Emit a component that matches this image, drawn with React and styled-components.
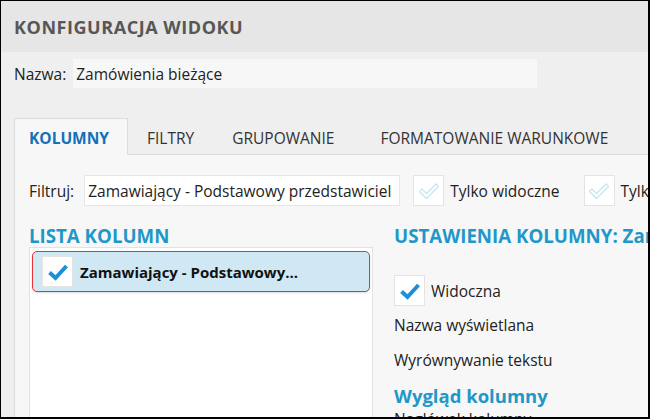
import React from "react";
import styled, { createGlobalStyle } from "styled-components";

const Global = createGlobalStyle`
  html, body { margin: 0; padding: 0; background: #efefef; }
  * { box-sizing: border-box; }
  body { font-family: "Open Sans", "Noto Sans", sans-serif; }
`;

const Frame = styled.div`
  width: 650px;
  height: 419px;
  overflow: hidden;
  border-style: solid;
  border-color: #000;
  border-width: 1px 2px 2px 1px;
  background: #efefef;
  display: flex;
  flex-direction: column;
`;

const Header = styled.div`
  height: 51px;
  flex: none;
  background: #e6e6e6;
  display: flex;
  align-items: center;
  padding-left: 13px;
  padding-top: 1px;
`;

const Title = styled.h1`
  margin: 0;
  font-size: 18px;
  font-weight: 700;
  color: #575757;
  letter-spacing: 0.55px;
  white-space: nowrap;
`;

const NameRow = styled.div`
  display: flex;
  align-items: center;
  margin: 7px 0 0 13px;
  height: 29px;
  flex: none;
`;

const Label = styled.span`
  font-size: 15.5px;
  color: #222;
  white-space: nowrap;
`;

const NameInput = styled.div`
  margin-left: 7px;
  width: 464px;
  height: 29px;
  background: #f7f7f7;
  font-size: 15.5px;
  color: #222;
  display: flex;
  align-items: center;
  padding-left: 3px;
  white-space: nowrap;
`;

const TabStrip = styled.div`
  margin: 30px 0 0 13px;
  display: flex;
  align-items: stretch;
  height: 37px;
  border-bottom: 1px solid #dcdcdc;
  flex: none;
`;

const Tab = styled.div`
  padding: 2px 18px 0 ${(p) => p.$pl}px;
  display: flex;
  align-items: center;
  font-size: 15.5px;
  text-transform: uppercase;
  white-space: nowrap;
  color: ${(p) => (p.$active ? "#1570b8" : "#333")};
  font-weight: ${(p) => (p.$active ? 700 : 400)};
  background: ${(p) => (p.$active ? "#f7f7f7" : "transparent")};
  border: 1px solid ${(p) => (p.$active ? "#dcdcdc" : "transparent")};
  border-bottom: none;
  margin-bottom: -1px;
`;

const Panel = styled.div`
  margin-left: 13px;
  flex: 1;
  background: #f7f7f7;
  border-left: 1px solid #dcdcdc;
  padding: 20px 0 0 14px;
  display: flex;
  flex-direction: column;
  min-width: 0;
  min-height: 0;
`;

const FilterRow = styled.div`
  display: flex;
  align-items: center;
  height: 31px;
  white-space: nowrap;
  flex: none;
`;

const FilterInput = styled.div`
  margin-left: 10px;
  width: 316px;
  height: 31px;
  background: #fff;
  border: 1px solid #e6e6e6;
  font-size: 15.5px;
  color: #222;
  display: flex;
  align-items: center;
  padding-left: 3px;
  flex: none;
  overflow: hidden;
`;

const CheckBox = styled.div`
  width: 31px;
  height: 31px;
  flex: none;
  background: #fff;
  border: 1px solid #e4e4e4;
  display: flex;
  align-items: center;
  justify-content: center;
  margin-left: ${(p) => p.$ml || 0}px;
`;

const CheckLabel = styled.span`
  font-size: 15.5px;
  color: #222;
  margin-left: 6px;
  white-space: nowrap;
`;

const Columns = styled.div`
  display: flex;
  margin-top: 19px;
  flex: 1;
  min-height: 0;
`;

const LeftCol = styled.div`
  width: 344px;
  flex: none;
  display: flex;
  flex-direction: column;
`;

const RightCol = styled.div`
  margin-left: 21px;
  display: flex;
  flex-direction: column;
  white-space: nowrap;
  min-width: 0;
`;

const SectionTitle = styled.h2`
  margin: 0;
  font-size: 18.7px;
  line-height: 22px;
  font-weight: 700;
  color: #1f98c9;
  white-space: nowrap;
`;

const ListBox = styled.div`
  flex: 1;
  background: #fff;
  border: 1px solid #e2e2e2;
  border-bottom: none;
  padding: 3px 2px;
`;

const ListItem = styled.div`
  height: 41px;
  background: #cfe8f4;
  border: 1.5px solid #e8323a;
  border-radius: 5px;
  box-shadow: 0 1px 2px rgba(0, 0, 0, 0.15);
  display: flex;
  align-items: center;
  padding-left: 9px;
`;

const ItemText = styled.span`
  margin-left: 7px;
  font-size: 15px;
  font-weight: 700;
  color: #111;
  white-space: nowrap;
`;

const VisibleRow = styled.div`
  display: flex;
  align-items: center;
  margin-top: 28px;
`;

const FieldLabel = styled.div`
  font-size: 15.5px;
  line-height: 20px;
  color: #222;
  margin-top: ${(p) => p.$mt}px;
`;

const SubTitle = styled.div`
  font-size: 18.5px;
  line-height: 24px;
  font-weight: 700;
  color: #1f98c9;
  margin-top: 14px;
`;

const FaintCheck = () => (
  <svg width="22" height="19" viewBox="0 0 22 19">
    <path
      d="M1.5 10.5 L4 8 L8.5 12.5 L18 3 L20.5 5.5 L8.5 17.5 Z"
      fill="none"
      stroke="#c6e5f4"
      strokeWidth="1.3"
      strokeLinejoin="round"
    />
  </svg>
);

const BoldCheck = () => (
  <svg width="22" height="18" viewBox="0 0 22 18">
    <path
      d="M2.5 9.5 L8.5 15 L19.5 3"
      fill="none"
      stroke="#1c8fd6"
      strokeWidth="4"
      strokeLinecap="butt"
    />
  </svg>
);

export default function App() {
  return (
    <>
      <Global />
      <Frame>
        <Header>
          <Title>KONFIGURACJA WIDOKU</Title>
        </Header>
        <NameRow>
          <Label>Nazwa:</Label>
          <NameInput>Zamówienia bieżące</NameInput>
        </NameRow>
        <TabStrip>
          <Tab $active $pl={14}>Kolumny</Tab>
          <Tab $pl={18}>Filtry</Tab>
          <Tab $pl={18}>Grupowanie</Tab>
          <Tab $pl={26}>Formatowanie warunkowe</Tab>
        </TabStrip>
        <Panel>
          <FilterRow>
            <Label>Filtruj:</Label>
            <FilterInput>Zamawiający - Podstawowy przedstawiciel</FilterInput>
            <CheckBox $ml={13}>
              <FaintCheck />
            </CheckBox>
            <CheckLabel>Tylko widoczne</CheckLabel>
            <CheckBox $ml={24}>
              <FaintCheck />
            </CheckBox>
            <CheckLabel>Tylko zaznaczone</CheckLabel>
          </FilterRow>
          <Columns>
            <LeftCol>
              <SectionTitle>LISTA KOLUMN</SectionTitle>
              <ListBox>
                <ListItem>
                  <CheckBox>
                    <BoldCheck />
                  </CheckBox>
                  <ItemText>Zamawiający - Podstawowy...</ItemText>
                </ListItem>
              </ListBox>
            </LeftCol>
            <RightCol>
              <SectionTitle>USTAWIENIA KOLUMNY: Zamawiający</SectionTitle>
              <VisibleRow>
                <CheckBox>
                  <BoldCheck />
                </CheckBox>
                <CheckLabel>Widoczna</CheckLabel>
              </VisibleRow>
              <FieldLabel $mt={9}>Nazwa wyświetlana</FieldLabel>
              <FieldLabel $mt={15}>Wyrównywanie tekstu</FieldLabel>
              <SubTitle>Wygląd kolumny</SubTitle>
              <FieldLabel $mt={1}>Nagłówek kolumny</FieldLabel>
            </RightCol>
          </Columns>
        </Panel>
      </Frame>
    </>
  );
}
